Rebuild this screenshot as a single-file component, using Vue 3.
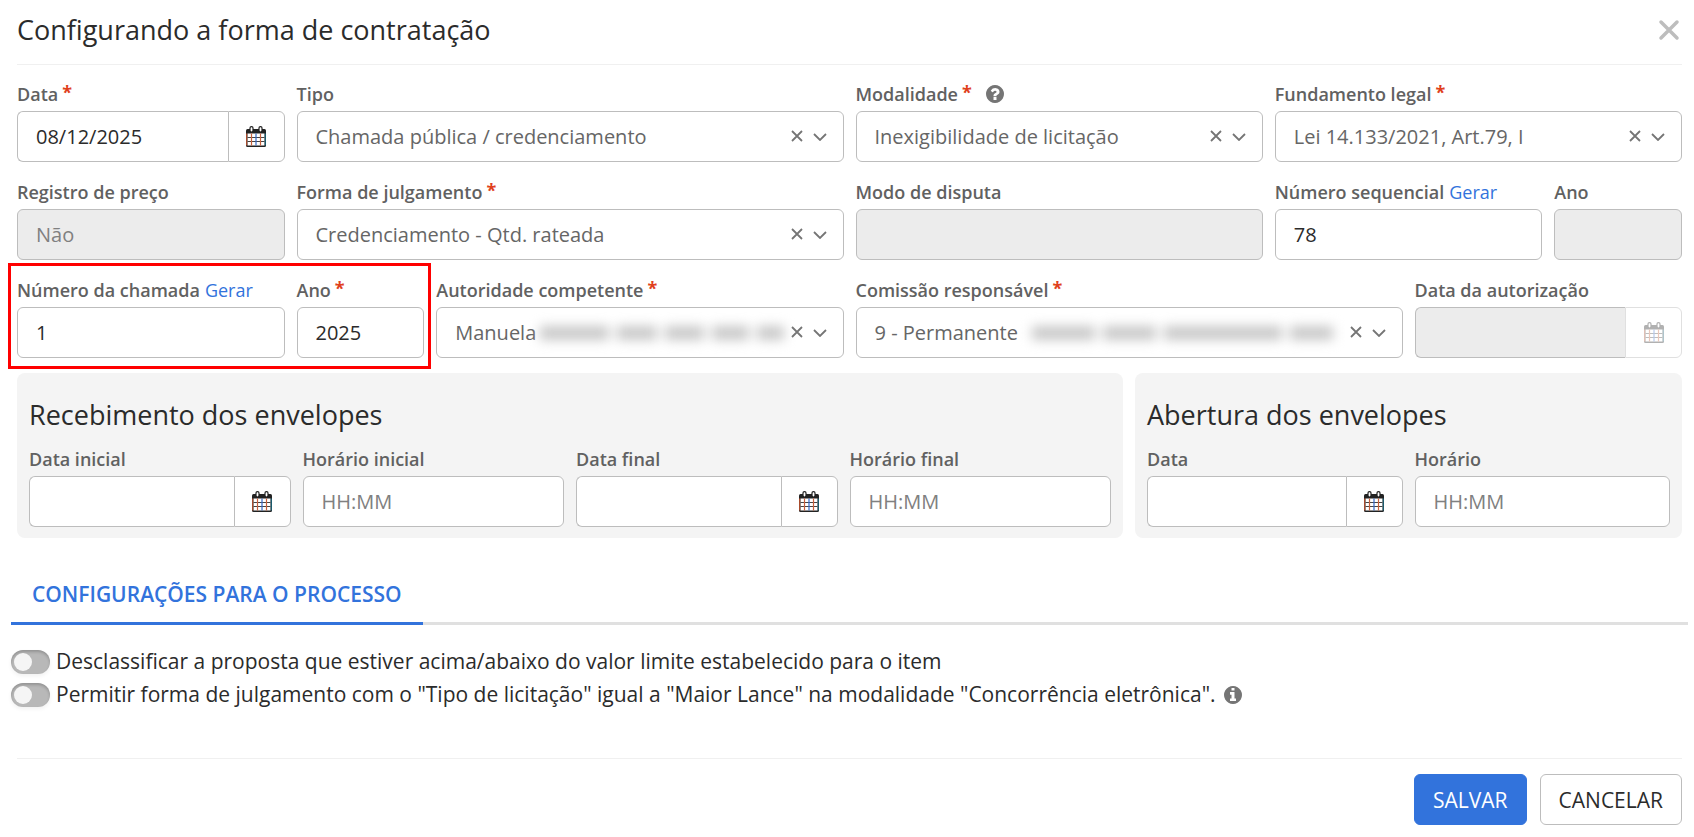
<script setup>
import { h, ref } from 'vue'

const svg = (cls, viewBox, children) =>
  h('svg', { class: cls, viewBox, 'aria-hidden': 'true' }, children)

const IconCalendar = () =>
  svg('icon-calendar', '0 0 20 21', [
    h('rect', { x: 0, y: 3, width: 20, height: 18, rx: 1.5, fill: '#222' }),
    h('rect', { x: 1.5, y: 7.5, width: 17, height: 12, fill: '#fff' }),
    h('path', { d: 'M.7 7.5v12', stroke: '#c8552f', 'stroke-width': 1 }),
    h('path', { d: 'M19.3 7.5v12', stroke: '#1a6a80', 'stroke-width': 1 }),
    h('path', { d: 'M1.5 11.5h17M1.5 15.5h17', stroke: '#444', 'stroke-width': 1 }),
    h('path', { d: 'M5.5 7.5v12M14.5 7.5v12', stroke: '#c8603c', 'stroke-width': 1.2 }),
    h('path', { d: 'M10 7.5v12', stroke: '#3568c8', 'stroke-width': 1.2 }),
    h('rect', { x: 4, y: 0.6, width: 3, height: 5.4, rx: 1.4, fill: '#fff', stroke: '#222', 'stroke-width': 1.2 }),
    h('rect', { x: 13, y: 0.6, width: 3, height: 5.4, rx: 1.4, fill: '#fff', stroke: '#222', 'stroke-width': 1.2 }),
  ])
const disc =
  'M1536 896q0 209-103 385.5t-279.5 279.5-385.5 103-385.5-103-279.5-279.5-103-385.5 103-385.5 279.5-279.5 385.5-103 385.5 103 279.5 279.5 103 385.5z'
const IconHelp = () =>
  svg('icon-round', '0 128 1536 1536', [
    h('path', {
      'fill-rule': 'evenodd',
      d: 'M896 1376v-192q0-14-9-23t-23-9h-192q-14 0-23 9t-9 23v192q0 14 9 23t23 9h192q14 0 23-9t9-23zm256-672q0-88-55.5-163t-138.5-116-170-41q-243 0-371 213-15 24 8 42l132 100q7 6 19 6 16 0 25-12 53-68 86-92 34-24 86-24 48 0 85.5 26t37.5 59q0 38-20 61t-68 45q-63 28-115.5 86.5t-52.5 125.5v36q0 14 9 23t23 9h192q14 0 23-9t9-23q0-19 21.5-49.5t54.5-49.5q32-18 49-28.5t46-35 44.5-48 28-60.5 12.5-81z' + disc,
    }),
  ])
const IconInfo = () =>
  svg('icon-round', '0 128 1536 1536', [
    h('path', {
      'fill-rule': 'evenodd',
      d: 'M1024 1376v-160q0-14-9-23t-23-9h-96v-512q0-14-9-23t-23-9h-320q-14 0-23 9t-9 23v160q0 14 9 23t23 9h96v320h-96q-14 0-23 9t-9 23v160q0 14 9 23t23 9h448q14 0 23-9t9-23zm-128-896v-160q0-14-9-23t-23-9h-192q-14 0-23 9t-9 23v160q0 14 9 23t23 9h192q14 0 23-9t9-23z' + disc,
    }),
  ])
const IconClear = () => svg('icon-clear', '0 0 12 12', [h('path', { d: 'M1 1l10 10M11 1L1 11' })])
const IconChevron = () => svg('icon-chevron', '0 0 14 8', [h('path', { d: 'M1 1l6 6 6-6' })])

const rows = [
  [
    { id: 'data', label: 'Data', required: true, type: 'date', value: '08/12/2025', span: 2 },
    { id: 'tipo', label: 'Tipo', type: 'select', value: 'Chamada pública / credenciamento', span: 4 },
    { id: 'modalidade', label: 'Modalidade', required: true, help: true, type: 'select', value: 'Inexigibilidade de licitação', span: 3 },
    { id: 'fundamento', label: 'Fundamento legal', required: true, type: 'select', value: 'Lei 14.133/2021, Art.79, I', span: 3 },
  ],
  [
    { id: 'registro', label: 'Registro de preço', type: 'text', value: 'Não', disabled: true, span: 2 },
    { id: 'forma', label: 'Forma de julgamento', required: true, type: 'select', value: 'Credenciamento - Qtd. rateada', span: 4 },
    { id: 'disputa', label: 'Modo de disputa', type: 'text', value: '', disabled: true, span: 3 },
    { id: 'sequencial', label: 'Número sequencial', link: true, type: 'text', value: '78', span: 2 },
    { id: 'ano-seq', label: 'Ano', type: 'text', value: '', disabled: true, span: 1 },
  ],
  [
    { id: 'chamada', label: 'Número da chamada', link: true, type: 'text', value: '1', span: 2 },
    { id: 'ano', label: 'Ano', required: true, type: 'text', value: '2025', span: 1 },
    { id: 'autoridade', label: 'Autoridade competente', required: true, type: 'select', value: 'Manuela', hidden: [78, 46, 44, 42, 30], span: 3 },
    { id: 'comissao', label: 'Comissão responsável', required: true, type: 'select', value: '9 - Permanente', hidden: [60, 50, 112, 40], span: 4 },
    { id: 'autorizacao', label: 'Data da autorização', type: 'date', value: '', disabled: true, span: 2 },
  ],
]

const panels = [
  {
    title: 'Recebimento dos envelopes',
    size: 'wide',
    fields: [
      { id: 'rec-data-ini', label: 'Data inicial', type: 'date', value: '' },
      { id: 'rec-hora-ini', label: 'Horário inicial', type: 'text', value: '', placeholder: 'HH:MM' },
      { id: 'rec-data-fim', label: 'Data final', type: 'date', value: '' },
      { id: 'rec-hora-fim', label: 'Horário final', type: 'text', value: '', placeholder: 'HH:MM' },
    ],
  },
  {
    title: 'Abertura dos envelopes',
    size: 'narrow',
    fields: [
      { id: 'ab-data', label: 'Data', type: 'date', value: '' },
      { id: 'ab-hora', label: 'Horário', type: 'text', value: '', placeholder: 'HH:MM' },
    ],
  },
]

const Field = ({ f }) => {
  const label = h('div', { class: 'label-row' }, [
    h('label', { for: f.id }, f.label),
    f.required ? h('span', { class: 'required' }, '*') : null,
    f.link ? h('a', { href: '#', class: 'generate' }, 'Gerar') : null,
    f.help ? h(IconHelp) : null,
  ])
  const input = () =>
    h('input', { id: f.id, type: 'text', class: 'control', value: f.value, placeholder: f.placeholder, disabled: f.disabled })
  let control
  if (f.type === 'select') {
    control = h('div', { class: 'select-box' }, [
      h('select', { id: f.id, class: 'control' }, [h('option', f.value)]),
      f.hidden
        ? h('span', { class: ['redacted', 'redacted-' + f.id] }, f.hidden.map((w) => h('i', { style: { flexGrow: w } })))
        : null,
      h('button', { type: 'button', class: 'clear', 'aria-label': 'Limpar' }, h(IconClear)),
      h(IconChevron),
    ])
  } else if (f.type === 'date') {
    control = h('div', { class: 'date-box' }, [
      input(),
      h('button', { type: 'button', class: 'date-button', 'aria-label': 'Abrir calendário', disabled: f.disabled }, h(IconCalendar)),
    ])
  } else control = input()
  return h('div', { class: ['field', f.span ? 'span-' + f.span : ''] }, [label, control])
}
Field.props = ['f']

const options = ref([
  { id: 'opt-limite', on: false, text: 'Desclassificar a proposta que estiver acima/abaixo do valor limite estabelecido para o item' },
  { id: 'opt-lance', on: false, info: true, text: 'Permitir forma de julgamento com o "Tipo de licitação" igual a "Maior Lance" na modalidade "Concorrência eletrônica".' },
])
</script>

<template>
  <form class="dialog" @submit.prevent>
    <header class="head">
      <h1>Configurando a forma de contratação</h1>
      <button type="button" class="close" aria-label="Fechar">
        <svg viewBox="0 0 22 22"><path d="M3 3l16 16M19 3L3 19" /></svg>
      </button>
    </header>

    <div class="grid">
      <template v-for="(row, i) in rows" :key="i">
        <div v-if="i === 2" class="highlight">
          <Field v-for="f in row.slice(0, 2)" :key="f.id" :f="f" />
        </div>
        <Field v-for="f in i === 2 ? row.slice(2) : row" :key="f.id" :f="f" />
      </template>
    </div>

    <div class="panels">
      <section v-for="p in panels" :key="p.title" :class="['panel', p.size]">
        <h2>{{ p.title }}</h2>
        <div class="panel-fields">
          <Field v-for="f in p.fields" :key="f.id" :f="f" />
        </div>
      </section>
    </div>

    <nav class="tabs">
      <a href="#" class="tab">CONFIGURAÇÕES PARA O PROCESSO</a>
    </nav>

    <div class="options">
      <div v-for="o in options" :key="o.id" class="option">
        <input :id="o.id" v-model="o.on" type="checkbox" class="toggle" />
        <label :for="o.id">{{ o.text }}</label>
        <IconInfo v-if="o.info" />
      </div>
    </div>

    <footer class="foot">
      <button type="submit" class="btn primary">SALVAR</button>
      <button type="button" class="btn">CANCELAR</button>
    </footer>
  </form>
</template>

<style>
body {
  background: #fff;
}
.dialog,
.dialog input,
.dialog select,
.dialog button {
  font-family: "Open Sans", "Noto Sans", sans-serif;
}
.dialog *,
.dialog *::before,
.dialog *::after {
  box-sizing: border-box;
}
.dialog .field {
  min-width: 0;
}
.dialog .span-1 { grid-column: span 1; }
.dialog .span-2 { grid-column: span 2; }
.dialog .span-3 { grid-column: span 3; }
.dialog .span-4 { grid-column: span 4; }
.dialog .label-row {
  display: flex;
  align-items: center;
  height: 26px;
  margin-bottom: 4px;
  font-size: 18px;
  line-height: 26px;
  white-space: nowrap;
}
.dialog .label-row label {
  font-weight: 600;
  color: #616161;
}
.dialog .required {
  margin-left: 4px;
  font-size: 18px;
  font-weight: 700;
  line-height: 22px;
  align-self: flex-start;
  color: #e0401c;
}
.dialog .generate {
  margin-left: 5px;
  color: #3273dc;
  text-decoration: none;
}
.dialog .icon-round {
  width: 18px;
  height: 18px;
  fill: #757575;
}
.dialog .label-row .icon-round {
  margin-left: 14px;
}
.dialog .control {
  display: block;
  width: 100%;
  height: 51px;
  margin: 0;
  padding: 0 18px;
  border: 1px solid #bdbdbd;
  border-radius: 6px;
  background: #fff;
  font-size: 20px;
  color: #2b2b2b;
  outline: none;
  appearance: none;
}
.dialog .control::placeholder {
  color: #808080;
  opacity: 1;
}
.dialog .control:disabled {
  background: #ececec;
  color: #808080;
}
.dialog .select-box {
  position: relative;
}
.dialog select.control {
  padding-right: 64px;
  color: #666;
}
.dialog .clear {
  position: absolute;
  top: 13px;
  right: 36px;
  display: flex;
  align-items: center;
  justify-content: center;
  width: 22px;
  height: 24px;
  padding: 0;
  border: 0;
  background: none;
}
.dialog .icon-clear {
  width: 12px;
  height: 12px;
}
.dialog .icon-chevron {
  position: absolute;
  top: 22px;
  right: 17px;
  width: 14px;
  height: 8px;
  pointer-events: none;
}
.dialog .icon-clear path,
.dialog .icon-chevron path {
  fill: none;
  stroke: #757575;
  stroke-width: 1.8;
}
.dialog .redacted {
  position: absolute;
  top: 14px;
  right: 60px;
  display: flex;
  align-items: center;
  gap: 8px;
  height: 24px;
  filter: blur(6px);
}
.dialog .redacted i {
  flex-basis: 0;
  height: 14px;
  background: #c8c8c8;
}
.dialog .redacted-autoridade { left: 104px; }
.dialog .redacted-comissao { left: 176px; right: 70px; }
.dialog .date-box {
  display: flex;
}
.dialog .date-box .control {
  flex: 1;
  min-width: 0;
  border-right: 0;
  border-radius: 6px 0 0 6px;
}
.dialog .date-button {
  display: flex;
  align-items: center;
  justify-content: center;
  width: 57px;
  height: 51px;
  padding: 0;
  border: 1px solid #bdbdbd;
  border-radius: 0 6px 6px 0;
  background: #fff;
}
.dialog .date-button:disabled {
  border-color: #e0e0e0;
}
.dialog .icon-calendar {
  width: 20px;
  height: 21px;
}
.dialog .date-button:disabled .icon-calendar {
  opacity: 0.35;
}
</style>

<style scoped>
.dialog {
  padding: 0 12px 12px 17px;
  color: #2b2b2b;
}
.head {
  display: flex;
  align-items: center;
  justify-content: space-between;
  height: 65px;
  padding-bottom: 5px;
  border-bottom: 1px solid #f0f0f0;
}
h1,
h2 {
  margin: 0;
  font-size: 27px;
  font-weight: 400;
  line-height: 36px;
}
.close {
  display: flex;
  width: 26px;
  height: 26px;
  padding: 2px;
  border: 0;
  background: none;
}
.close svg {
  width: 22px;
  height: 22px;
}
.close path {
  stroke: #bdbdbd;
  stroke-width: 3.5;
  stroke-linecap: round;
}
.grid {
  display: grid;
  grid-template-columns: repeat(12, minmax(0, 1fr));
  gap: 17px 12px;
  padding-top: 16px;
}
.highlight {
  position: relative;
  display: grid;
  grid-template-columns: subgrid;
  grid-column: span 3;
}
.highlight::after {
  content: "";
  position: absolute;
  inset: -14px -7px -11px -9px;
  border: 3px solid #f00;
  pointer-events: none;
}
.panels {
  display: grid;
  grid-template-columns: repeat(12, minmax(0, 1fr));
  gap: 12px;
  margin-top: 15px;
}
.panel {
  padding: 24px 12px 11px;
  border-radius: 8px;
  background: #f4f4f4;
}
.wide {
  grid-column: span 8;
}
.narrow {
  grid-column: span 4;
}
.panel-fields {
  display: grid;
  grid-auto-flow: column;
  grid-auto-columns: minmax(0, 1fr);
  gap: 12px;
  margin-top: 13px;
}
.tabs {
  display: flex;
  margin: 22px -6px 0;
  border-bottom: 3px solid #e0e0e0;
}
.tab {
  margin-bottom: -3px;
  padding: 20px 21px 14px;
  border-bottom: 3px solid #3273dc;
  font-size: 21px;
  font-weight: 600;
  line-height: 28px;
  color: #3273dc;
  text-decoration: none;
}
.options {
  margin: 20px -6px 0;
}
.option {
  display: flex;
  align-items: center;
  height: 33px;
  font-size: 21px;
  line-height: 28px;
}
.option label {
  padding-bottom: 2px;
}
.option .icon-round {
  margin-left: 8px;
}
.toggle {
  flex: none;
  width: 39px;
  height: 24px;
  margin: 0 6px 0 0;
  padding: 3px;
  border-radius: 12px;
  background: #b8b8b8;
  box-shadow: inset 0 2px 3px rgba(0, 0, 0, 0.2), 0 2px 4px rgba(0, 0, 0, 0.06);
  appearance: none;
}
.toggle::before {
  content: "";
  display: block;
  width: 18px;
  height: 18px;
  border-radius: 50%;
  background: #f5f5f5;
}
.toggle:checked {
  background: #3273dc;
}
.toggle:checked::before {
  margin-left: 15px;
}
.foot {
  display: flex;
  justify-content: flex-end;
  gap: 13px;
  margin-top: 47px;
  padding-top: 15px;
  border-top: 1px solid #f0f0f0;
}
.btn {
  height: 51px;
  padding: 0 18px;
  border: 1px solid #bdbdbd;
  border-radius: 6px;
  background: #fff;
  font-size: 21px;
  color: #2b2b2b;
}
.btn.primary {
  border-color: #3273dc;
  background: #3273dc;
  color: #fff;
}
</style>
